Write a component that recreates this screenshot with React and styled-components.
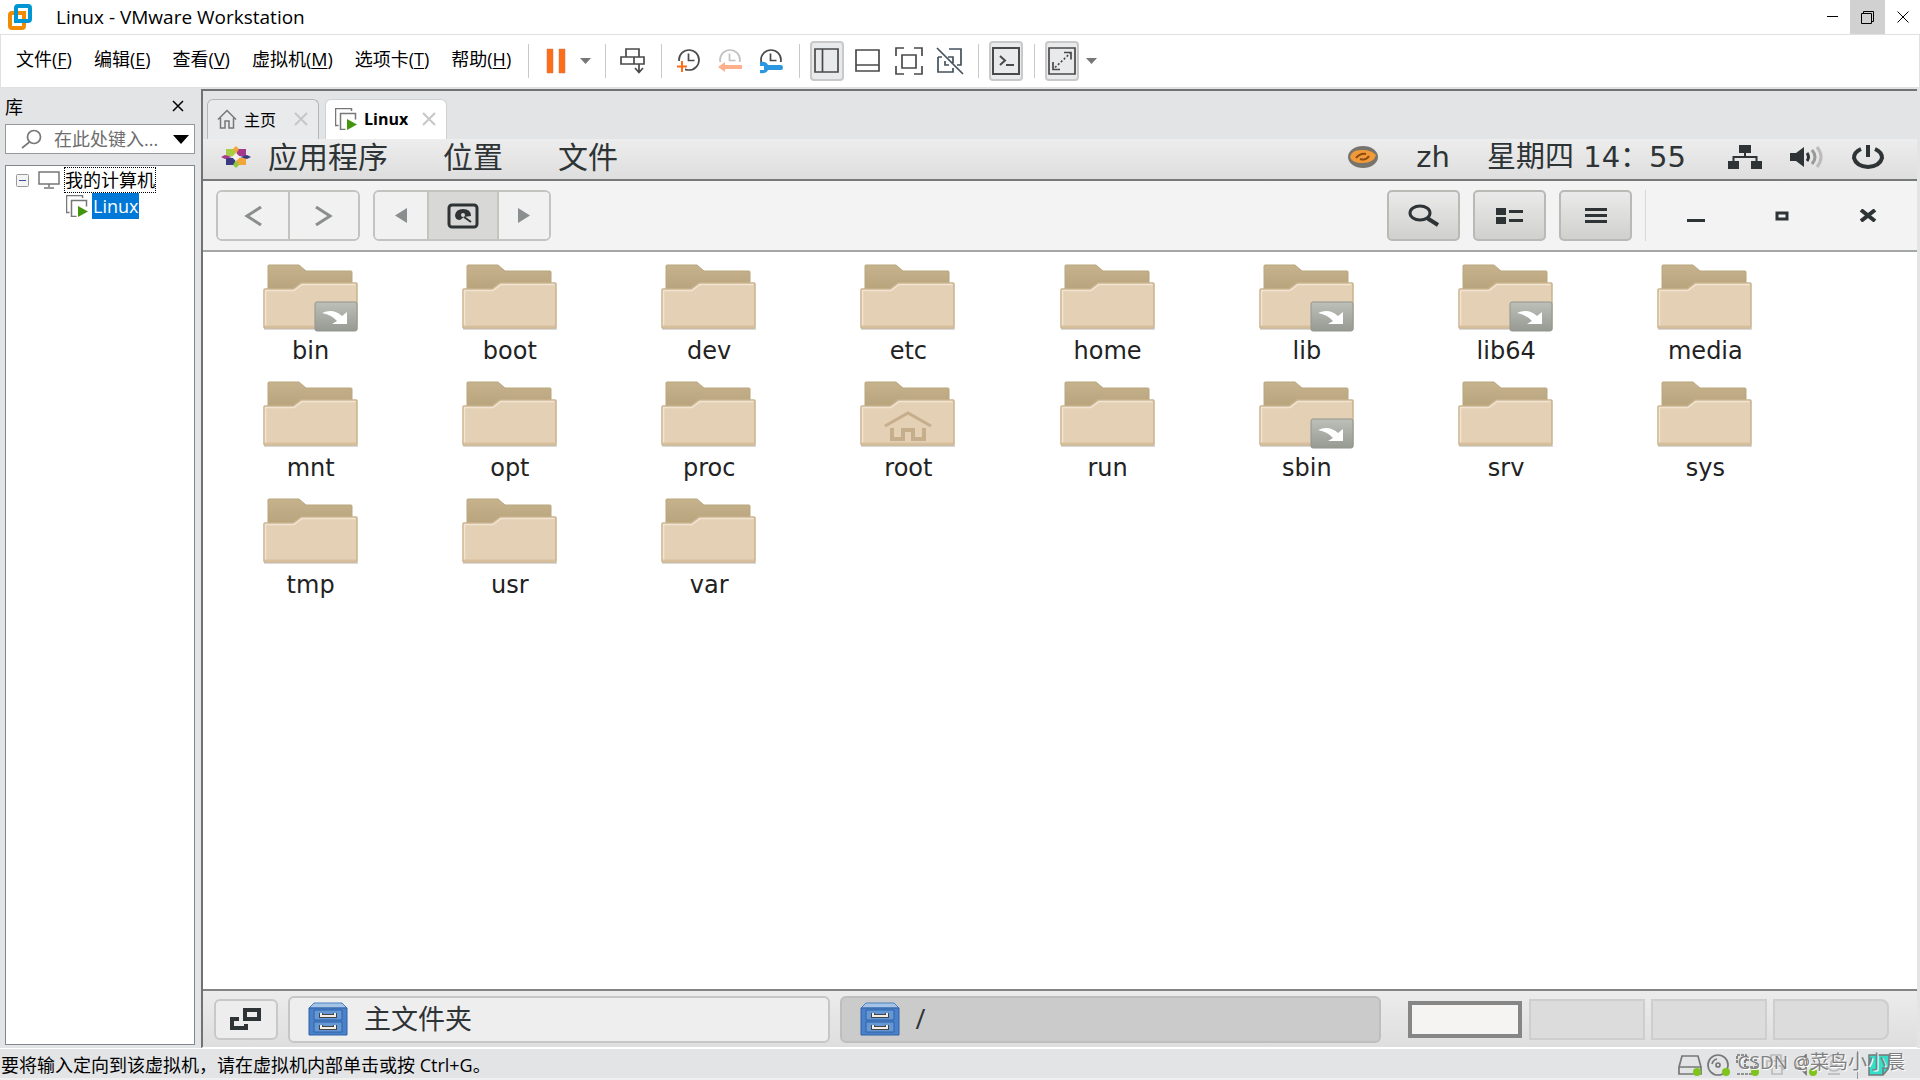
import React, { useState } from "react";
import styled, { createGlobalStyle, css } from "styled-components";

const menus = [
  { label: "文件", hotkey: "F" },
  { label: "编辑", hotkey: "E" },
  { label: "查看", hotkey: "V" },
  { label: "虚拟机", hotkey: "M" },
  { label: "选项卡", hotkey: "T" },
  { label: "帮助", hotkey: "H" },
];

const folders = [
  { name: "bin", link: true },
  { name: "boot" },
  { name: "dev" },
  { name: "etc" },
  { name: "home" },
  { name: "lib", link: true },
  { name: "lib64", link: true },
  { name: "media" },
  { name: "mnt" },
  { name: "opt" },
  { name: "proc" },
  { name: "root", home: true },
  { name: "run" },
  { name: "sbin", link: true },
  { name: "srv" },
  { name: "sys" },
  { name: "tmp" },
  { name: "usr" },
  { name: "var" },
];

function App() {
  return (
    <>
      <GlobalStyle />
      <Window>
        <TitleBar>
          <VmwareLogo />
          <Title>Linux - VMware Workstation</Title>
          <WindowButton aria-label="minimize">
            <svg width="14" height="14" stroke="#000"><path d="M1 6.5h11" /></svg>
          </WindowButton>
          <WindowButton aria-label="restore" $active>
            <svg width="14" height="14" stroke="#000" fill="none">
              <path d="M.5 3.5h10v10H.5zM2.5 3.5v-2h10v10h-2" />
            </svg>
          </WindowButton>
          <WindowButton aria-label="close">
            <svg width="14" height="14" stroke="#000"><path d="M1.5 1.5l11 11m0-11l-11 11" /></svg>
          </WindowButton>
        </TitleBar>
        <MenuBar>
          <Menus>
            {menus.map((menu) => (
              <MenuButton key={menu.hotkey}>
                {menu.label}(<u>{menu.hotkey}</u>)
              </MenuButton>
            ))}
          </Menus>
          <HostTools />
        </MenuBar>
        <Body>
          <Library />
          <Main>
            <Tabs>
              <Tab>
                <svg width="20" height="20" fill="none" stroke="#777" strokeWidth="1.5">
                  <path d="M1 10.5L10 1.5l9 9M3.5 9v10H8v-7h4v7h4.5V9" />
                </svg>
                主页
                <TabClose />
              </Tab>
              <Tab $active>
                <VmIcon />
                <b>Linux</b>
                <TabClose />
              </Tab>
            </Tabs>
            <Guest />
          </Main>
        </Body>
        <StatusBar />
      </Window>
    </>
  );
}

const VmwareLogo = () => (
  <svg width="24" height="26" viewBox="0 0 24 26" fill="none" strokeWidth="4">
    <rect x="2" y="9" width="14" height="15" rx="2" stroke="#f38b00" />
    <rect x="8" y="2" width="14" height="15" rx="2" stroke="#0095d3" />
    <path d="M8 13v4h3" stroke="#fff" strokeWidth="5" />
    <path d="M8 9v8h8" stroke="#0095d3" strokeWidth="4" />
    <path d="M10 9h6v6" stroke="#f38b00" strokeWidth="4" />
  </svg>
);

const VmIcon = () => (
  <svg width="22" height="22" viewBox="0 0 22 22" fill="none">
    <path d="M3.5 17.5h-3V.5h16V3" stroke="#777" strokeWidth="1.5" />
    <path d="M10.5 21.5h-5v-16h15v6" stroke="#777" strokeWidth="1.5" />
    <path d="M12 11l10 5.5-10 5.5z" fill="#43960d" />
  </svg>
);

const TabClose = () => (
  <CloseButton aria-label="close tab">
    <svg width="14" height="14" stroke="#c6c7c9" strokeWidth="2">
      <path d="M1 1l12 12M13 1L1 13" />
    </svg>
  </CloseButton>
);

const Caret = () => (
  <CaretButton aria-label="more">
    <svg width="11" height="6"><path d="M0 0h11L5.5 6z" fill="#777" /></svg>
  </CaretButton>
);

const Clock = ({ color = "#4a4a4a" }) => (
  <g fill="none" stroke={color} strokeWidth="1.7">
    <circle cx="13" cy="12" r="10" />
    <path d="M12.5 5.5v7h6" />
  </g>
);

function HostTools() {
  return (
    <Tools>
      <ToolGroup>
        <ToolButton aria-label="pause">
          <svg width="20" height="26" fill="#ff6c1a" stroke="#c77b52" strokeWidth=".5">
            <path d="M1 1h6v24H1zM13 1h6v24h-6z" />
          </svg>
        </ToolButton>
        <Caret />
      </ToolGroup>
      <ToolGroup>
        <ToolButton aria-label="send keys">
          <svg width="26" height="26" fill="none" stroke="#4a4a4a" strokeWidth="1.7">
            <path d="M6 1h13v8H6zM1 9h13v7H1zM14 9h10v7H14zM19 16v8M15 20l4 4.5 4-4.5" />
          </svg>
        </ToolButton>
      </ToolGroup>
      <ToolGroup>
        <ToolButton aria-label="take snapshot">
          <svg width="26" height="26">
            <Clock />
            <path d="M0 13h9v13H0z" fill="#fff" />
            <path d="M6 13v11M1 18.5h10" stroke="#ff6c1a" strokeWidth="2" />
          </svg>
        </ToolButton>
        <ToolButton aria-label="revert snapshot">
          <svg width="26" height="26">
            <Clock color="#c2c2c2" />
            <path d="M0 14h26v12H0z" fill="#fff" />
            <path d="M1 19l7-5v3h17v4H8v3z" fill="#ffb18c" />
          </svg>
        </ToolButton>
        <ToolButton aria-label="snapshot manager">
          <svg width="26" height="26">
            <Clock />
            <path d="M0 14h26v12H0z" fill="#fff" />
            <path d="M2 14q6-1 8 3h13q2 0 2 2.500t-2 2.500H10q-2 4-8 3v-3h4v-4H2z" fill="#2b97de" />
          </svg>
        </ToolButton>
      </ToolGroup>
      <ToolGroup>
        <ToolButton aria-label="library" $active>
          <svg width="26" height="26" fill="none" stroke="#4a4a4a" strokeWidth="1.7">
            <path d="M1 1h23v23H1zM8.5 1v23" />
          </svg>
        </ToolButton>
        <ToolButton aria-label="thumbnails">
          <svg width="26" height="26" fill="none" stroke="#4a4a4a" strokeWidth="1.7">
            <path d="M1 2h23v21H1zM1 17h23" />
          </svg>
        </ToolButton>
        <ToolButton aria-label="full screen">
          <svg width="28" height="28" fill="none" stroke="#4a4a4a" strokeWidth="1.7">
            <path d="M1 9V1h8M19 1h8v8M27 19v8h-8M9 27H1v-8M7 8h14v13H7z" />
          </svg>
        </ToolButton>
        <ToolButton aria-label="unity">
          <svg width="28" height="28" fill="none" stroke="#44525c" strokeWidth="1.7">
            <path d="M13 2h12v16h-4M2 10v15h15v-4M2 10h4M12 10h5v6M9 14v4h4M1 1l26 26" />
          </svg>
        </ToolButton>
      </ToolGroup>
      <ToolGroup>
        <ToolButton aria-label="console" $active>
          <svg width="28" height="28" fill="none" stroke="#4a4a4a" strokeWidth="2">
            <path d="M1 1h26v26H1z" />
            <path d="M8 9l5 4.5L8 18M14 18h8" />
          </svg>
        </ToolButton>
      </ToolGroup>
      <ToolGroup>
        <ToolButton aria-label="stretch" $active>
          <svg width="28" height="28" fill="none" stroke="#4a4a4a" strokeWidth="1.7">
            <path d="M1 1h26v26H1zM16 5.5h7v7M5 15v7.5h7" />
            <path d="M7 20.5L22 6.500" strokeDasharray="2 2" />
          </svg>
        </ToolButton>
        <Caret />
      </ToolGroup>
    </Tools>
  );
}

function Library() {
  const [query, setQuery] = useState("");

  return (
    <Sidebar>
      <SidebarHead>
        库
        <CloseButton aria-label="close library">
          <svg width="12" height="12" stroke="#000" strokeWidth="1.5">
            <path d="M1 1l10 10M11 1L1 11" />
          </svg>
        </CloseButton>
      </SidebarHead>
      <SearchBox>
        <svg width="21" height="20" fill="none" stroke="#777" strokeWidth="1.7">
          <circle cx="13" cy="8" r="6.5" />
          <path d="M8.5 13L1 19" />
        </svg>
        <input
          aria-label="search"
          placeholder="在此处键入..."
          value={query}
          onChange={(e) => setQuery(e.target.value)}
        />
        <svg width="16" height="9"><path d="M0 0h16L8 9z" /></svg>
      </SearchBox>
      <Tree>
        <TreeRow>
          <TreeToggle aria-label="collapse">
            <svg width="13" height="13" fill="#f4f4f4" stroke="#999">
              <rect x=".5" y=".5" width="12" height="12" rx="1" />
              <path d="M3 6.5h7" stroke="#3c4f9e" />
            </svg>
          </TreeToggle>
          <svg width="22" height="18" fill="none" stroke="#777" strokeWidth="1.5">
            <path d="M1 1h20v12H1zM11 13v3M6 17h10" />
          </svg>
          <TreeLabel $focused>我的计算机</TreeLabel>
        </TreeRow>
        <TreeRow $child>
          <VmIcon />
          <TreeLabel $selected>Linux</TreeLabel>
        </TreeRow>
      </Tree>
    </Sidebar>
  );
}

function FolderIcon({ link, home }) {
  return (
    <svg width="98" height="70" viewBox="0 0 98 70">
      <defs>
        <linearGradient id="back" x2="0" y2="1">
          <stop offset="0" stopColor="#c6b38d" />
          <stop offset="1" stopColor="#b7a37c" />
        </linearGradient>
        <linearGradient id="emblem" x2="0" y2="1">
          <stop offset="0" stopColor="#bcc0b8" />
          <stop offset="1" stopColor="#969a92" />
        </linearGradient>
      </defs>
      <path d="M2 66h94v2H2z" fill="#000" opacity=".15" />
      <path d="M6 28V4q0-1 1-1h30l7 6h45q1 0 1 1v18z" fill="url(#back)" stroke="#b9a67f" />
      <path
        d="M2 65V28q0-1 1-1h28l8-6h55q1 0 1 1v43q0 1-1 1H3q-1 0-1-1z"
        fill="#e3d0b5"
        stroke="#c9b28c"
        strokeWidth="1.5"
      />
      <path d="M3.5 64V28.5H32l8-6h53.5" fill="none" stroke="#f1e4d2" strokeWidth="1.5" />
      <path d="M3 64.5h91" stroke="#d9c09d" strokeWidth="2" />
      {home && (
        <g fill="none" stroke="#c6ae8c" strokeWidth="3">
          <path d="M26 47l23-13 23 13" />
          <path d="M33 49v11h11v-9h10v9h11V49" strokeWidth="4" />
        </g>
      )}
      {link && (
        <>
          <rect x="53" y="40" width="42" height="29" rx="2" fill="url(#emblem)" stroke="#92968f" />
          <path d="M60 51q11-5 20 3l5-4v12H70l5-3q-5-6-15-8z" fill="#fff" />
        </>
      )}
    </svg>
  );
}

const CabinetIcon = () => (
  <svg width="40" height="34" viewBox="0 0 40 34">
    <path d="M1 6l5-5h28l5 5z" fill="#a5c4e6" stroke="#4b80c0" />
    <path d="M1 6h38v27H1z" fill="#4a81c8" stroke="#2f62a8" />
    <path d="M6 8h28v10H6zM6 20h28v10H6z" fill="#6497d6" stroke="#2f62a8" />
    <path d="M13 11v3h14v-3M13 23v3h14v-3" fill="none" stroke="#444" strokeWidth="4" />
    <path d="M13 11v3h14v-3M13 23v3h14v-3" fill="none" stroke="#f0eee8" strokeWidth="2" />
  </svg>
);

const CentosLogo = () => (
  <svg width="30" height="22" viewBox="-15 -11 30 22">
    <path d="M-10-8h9v7h-9z" fill="#a5cd45" />
    <path d="M1-8h9v7H1z" fill="#a3388c" />
    <path d="M-10 1h9v7h-9z" fill="#3a3a83" />
    <path d="M1 1h9v7H1z" fill="#f0a63a" />
    <path d="M0-11l3 3-3 5-3-5z" fill="#f0a63a" />
    <path d="M0 11l3-3-3-5-3 5z" fill="#8fc93a" />
    <path d="M-15 0l4-2 7 2-7 2z" fill="#a3388c" />
    <path d="M15 0l-4-2-7 2 7 2z" fill="#3a3a83" />
    <circle r="3" fill="#f4f0ea" />
  </svg>
);

function Guest() {
  return (
    <Desktop>
      <TopPanel>
        <PanelMenu>
          <CentosLogo />
          应用程序
        </PanelMenu>
        <PanelMenu>位置</PanelMenu>
        <PanelMenu>文件</PanelMenu>
        <Tray>
          <svg width="32" height="24" viewBox="0 0 32 24">
            <ellipse cx="16" cy="12" rx="15" ry="11" fill="#77736d" />
            <path d="M3 12q2-8 13-7 8 0 13 5-2 8-14 8Q5 18 3 12z" fill="#f29a38" />
            <path d="M9 13q4-5 10-4M13 14q6 2 9-3" fill="none" stroke="#8a4a12" strokeWidth="2" />
          </svg>
          <span>zh</span>
          <time>星期四 14：55</time>
          <TrayIcons>
            <svg width="34" height="24" fill="#2e3436">
              <path d="M11 0h12v8H11zM0 16h11v8H0zM23 16h11v8H23z" />
              <path d="M17 8v4M5.5 17v-5h23v5" fill="none" stroke="#2e3436" strokeWidth="2" />
            </svg>
            <svg width="34" height="22" fill="none" strokeWidth="3">
              <path d="M0 7h6l8-6v20l-8-6H0z" fill="#2e3436" />
              <path d="M17 7q3 4 0 8" stroke="#2e3436" />
              <path d="M22 4q6 7 0 14" stroke="#999" />
              <path d="M27 1q8 10 0 20" stroke="#bbb" />
            </svg>
            <svg width="32" height="24" fill="none" stroke="#2e3436" strokeWidth="4">
              <path d="M9 4Q2 7 2 13q2 8 14 9 12-1 14-9 0-6-7-9" />
              <path d="M16 0v12" />
            </svg>
          </TrayIcons>
        </Tray>
      </TopPanel>
      <FilesBar>
        <LinkedButtons>
          <PathButton aria-label="back">
            <svg width="18" height="20" fill="none" stroke="#8b8e8f" strokeWidth="3">
              <path d="M17 1L3 10l14 9" />
            </svg>
          </PathButton>
          <PathButton aria-label="forward">
            <svg width="18" height="20" fill="none" stroke="#8b8e8f" strokeWidth="3">
              <path d="M1 1l14 9-14 9" />
            </svg>
          </PathButton>
        </LinkedButtons>
        <LinkedButtons>
          <PathButton aria-label="previous folder" $narrow>
            <svg width="12" height="15"><path d="M12 0v15L0 7.500z" fill="#8b8e8f" /></svg>
          </PathButton>
          <PathButton aria-label="filesystem root" $active>
            <svg width="32" height="26" fill="none" stroke="#2e3436" strokeWidth="3">
              <rect x="2" y="2" width="28" height="22" rx="3" />
              <path d="M8 12q1-6 8-6 8 0 8 7l-7 1-4 3q-5 0-5-5z" fill="#2e3436" stroke="none" />
              <path d="M17 14l7 5" strokeWidth="2" />
              <circle cx="16" cy="12" r="2" fill="#d8d8d6" stroke="none" />
            </svg>
          </PathButton>
          <PathButton aria-label="next folder" $narrow>
            <svg width="12" height="15"><path d="M0 0v15l12-7.500z" fill="#8b8e8f" /></svg>
          </PathButton>
        </LinkedButtons>
        <Actions>
          <ActionButton aria-label="search files">
            <svg width="32" height="23" fill="none" stroke="#2e3436">
              <ellipse cx="12" cy="9" rx="10" ry="7" strokeWidth="3" />
              <path d="M19 14l11 7" strokeWidth="4" />
            </svg>
          </ActionButton>
          <ActionButton aria-label="list view">
            <svg width="28" height="16" fill="#2e3436">
              <path d="M0 0h10v7H0zM0 9h10v7H0zM13 2h14v3H13zM13 11h14v3H13z" />
            </svg>
          </ActionButton>
          <ActionButton aria-label="menu">
            <svg width="22" height="16" fill="#2e3436">
              <path d="M0 0h22v3H0zM0 6h22v3H0zM0 12h22v3H0z" />
            </svg>
          </ActionButton>
        </Actions>
        <FrameButtons>
          <FrameButton aria-label="minimize files">
            <svg width="18" height="14"><path d="M0 10h18v3H0z" fill="#2e3436" /></svg>
          </FrameButton>
          <FrameButton aria-label="maximize files">
            <svg width="14" height="10" fill="none" stroke="#2e3436" strokeWidth="3">
              <path d="M2 2h10v6H2z" />
            </svg>
          </FrameButton>
          <FrameButton aria-label="close files">
            <svg width="18" height="13" stroke="#2e3436" strokeWidth="4">
              <path d="M2 1l14 11M16 1L2 12" />
            </svg>
          </FrameButton>
        </FrameButtons>
      </FilesBar>
      <Files>
        {folders.map((folder) => (
          <Folder key={folder.name}>
            <FolderIcon link={folder.link} home={folder.home} />
            {folder.name}
          </Folder>
        ))}
      </Files>
      <BottomPanel>
        <ShowDesktop aria-label="show desktop">
          <svg width="32" height="22" fill="none" stroke="#2e3436" strokeWidth="4">
            <path d="M15 2h14v9H15z" />
            <path d="M9 11H2v9h14v-4" />
          </svg>
        </ShowDesktop>
        <Task>
          <CabinetIcon />
          主文件夹
        </Task>
        <Task $active>
          <CabinetIcon />/
        </Task>
        <Workspaces>
          <Workspace aria-label="workspace 1" $active />
          <Workspace aria-label="workspace 2" />
          <Workspace aria-label="workspace 3" />
          <Workspace aria-label="workspace 4" />
        </Workspaces>
      </BottomPanel>
    </Desktop>
  );
}

const Dot = () => <circle cx="19" cy="18" r="4" fill="#7fc41c" stroke="none" />;

function StatusBar() {
  return (
    <Status>
      <span>要将输入定向到该虚拟机，请在虚拟机内部单击或按 Ctrl+G。</span>
      <Devices>
        <svg width="24" height="22" fill="none" stroke="#777" strokeWidth="1.7">
          <path d="M1 13L4 2h16l3 11v7H1zM1 13h22" />
          <Dot />
        </svg>
        <svg width="24" height="22" fill="none" stroke="#777" strokeWidth="1.7">
          <circle cx="11" cy="11" r="10" />
          <circle cx="11" cy="11" r="2" />
          <path d="M5 10q1-4 5-5" />
          <Dot />
        </svg>
        <svg width="24" height="22" fill="none" stroke="#777" strokeWidth="1.7">
          <path d="M1 9V1h9v7M9 13V6h11v7zM1 20h17" strokeDasharray="3 1" />
          <Dot />
        </svg>
        <svg width="24" height="22" fill="none" stroke="#bbb" strokeWidth="1.7">
          <path d="M6 7V1h10v6M6 15H2V7h19v8h-4M7 12h10v8H7z" />
        </svg>
        <svg width="24" height="22" fill="none" stroke="#777" strokeWidth="1.7">
          <path d="M2 7h4l6-6v19l-6-6H2z" />
          <Dot />
        </svg>
        <svg width="24" height="22" fill="none" stroke="#bbb" strokeWidth="1.7">
          <circle cx="11" cy="9" r="8" />
          <circle cx="11" cy="9" r="3" />
          <path d="M5 20h12" />
        </svg>
        <Divider />
        <svg width="22" height="22" fill="#32dfca" stroke="#777" strokeWidth="1.5">
          <path d="M1 1h20v13l-6 7H1zM15 21v-7h6" />
        </svg>
      </Devices>
      <Watermark>CSDN @菜鸟小小晨</Watermark>
    </Status>
  );
}

const GlobalStyle = createGlobalStyle`
  * {
    box-sizing: border-box;
  }
  body {
    margin: 0;
    background: #e3e4e6;
  }
  body, button, input {
    font-family: "Open Sans", "Noto Sans CJK SC", sans-serif;
    font-size: 18px;
    color: #000;
  }
  button {
    border: 0;
    padding: 0;
    background: none;
  }
  svg {
    flex: none;
    display: block;
  }
`;

const Window = styled.div`
  min-height: 100vh;
  display: flex;
  flex-direction: column;
`;

const TitleBar = styled.header`
  height: 34px;
  display: flex;
  align-items: center;
  padding-left: 8px;
  background: #fff;
`;

const Title = styled.h1`
  flex: 1;
  margin: 0 0 0 24px;
  font-size: 19px;
  font-weight: 400;
  line-height: 24px;
`;

const WindowButton = styled.button`
  width: 35px;
  height: 34px;
  display: flex;
  align-items: center;
  justify-content: center;
  background: ${(props) => (props.$active ? "#d1d1d1" : "none")};
`;

const MenuBar = styled.div`
  height: 54px;
  display: flex;
  align-items: center;
  background: #fff;
  border: 1px solid #e0e0e0;
`;

const Menus = styled.nav`
  display: flex;
  gap: 22px;
  padding: 0 17px 4px 15px;
`;

const MenuButton = styled.button`
  line-height: 26px;
  white-space: nowrap;
  u {
    text-underline-offset: 2px;
  }
`;

const Tools = styled.div`
  display: flex;
  align-items: center;
`;

const ToolGroup = styled.div`
  height: 34px;
  display: flex;
  align-items: center;
  gap: 7px;
  padding: 0 11px 0 10px;
  border-left: 1px solid #c9c9c9;
  &:first-child {
    padding-right: 14px;
  }
`;

const ToolButton = styled.button`
  width: 34px;
  height: 40px;
  display: flex;
  align-items: center;
  justify-content: center;
  border-radius: 4px;
  ${(props) =>
    props.$active &&
    css`
      background: #e9eaec;
      border: 2px solid #c9c9c9;
    `}
`;

const CaretButton = styled.button`
  width: 11px;
  display: flex;
`;

const CloseButton = styled.button`
  display: flex;
  margin-left: auto;
`;

const Body = styled.div`
  flex: 1;
  display: flex;
  min-height: 0;
`;

const Sidebar = styled.aside`
  width: 201px;
  flex: none;
  display: flex;
  flex-direction: column;
  padding: 0 6px 3px 5px;
`;

const SidebarHead = styled.div`
  height: 36px;
  display: flex;
  align-items: center;
  padding-right: 11px;
`;

const SearchBox = styled.label`
  height: 30px;
  display: flex;
  align-items: center;
  padding: 0 5px 0 15px;
  background: #fff;
  border: 1px solid #999;
  input {
    flex: 1;
    min-width: 0;
    border: 0;
    padding: 0 0 0 12px;
    background: none;
    outline: none;
  }
  input::placeholder {
    color: #6d6d6d;
    opacity: 1;
  }
`;

const Tree = styled.div`
  flex: 1;
  margin-top: 11px;
  padding: 1px 0 0 10px;
  background: #fff;
  border: 1px solid #828790;
`;

const TreeRow = styled.div`
  height: 26px;
  display: flex;
  align-items: center;
  gap: 4px;
  padding-left: ${(props) => (props.$child ? "50px" : "0")};
`;

const TreeToggle = styled.button`
  margin-right: 5px;
`;

const TreeLabel = styled.span`
  line-height: 24px;
  border: 1px ${(props) => (props.$focused ? "dotted #000" : "solid transparent")};
  ${(props) =>
    props.$selected &&
    css`
      color: #fff;
      background: #0078d7;
    `}
`;

const Main = styled.main`
  flex: 1;
  min-width: 0;
  display: flex;
  flex-direction: column;
  margin: 1px 3px 0 0;
  border-left: 2px solid #707274;
  border-top: 2px solid #707274;
  border-bottom: 1px solid #fff;
`;

const Tabs = styled.div`
  height: 48px;
  display: flex;
  align-items: flex-end;
  gap: 6px;
  padding-left: 4px;
`;

const Tab = styled.div`
  width: ${(props) => (props.$active ? "122px" : "112px")};
  height: 40px;
  display: flex;
  align-items: center;
  gap: 7px;
  padding: 0 10px 2px 9px;
  font-size: 16px;
  background: ${(props) => (props.$active ? "#fff" : "#e9eaec")};
  border: 1px solid ${(props) => (props.$active ? "#d0d1d3" : "#b4b5b7")};
  border-bottom: 0;
  border-radius: 6px 6px 0 0;
`;

const Desktop = styled.section`
  flex: 1;
  display: flex;
  flex-direction: column;
  color: #2e3436;
`;

const TopPanel = styled.div`
  height: 42px;
  display: flex;
  align-items: center;
  gap: 55px;
  padding: 0 33px 4px 18px;
  background: linear-gradient(#ededed, #dedede);
  border-bottom: 2px solid #77797a;
`;

const PanelMenu = styled.button`
  display: flex;
  align-items: center;
  gap: 17px;
  color: #2e3436;
  font-size: 30px;
  line-height: 36px;
`;

const Tray = styled.div`
  display: flex;
  align-items: center;
  gap: 37px;
  margin-left: auto;
  font-family: "DejaVu Sans", "Noto Sans CJK SC", sans-serif;
  font-size: 29px;
  line-height: 36px;
`;

const TrayIcons = styled.div`
  display: flex;
  align-items: center;
  gap: 28px;
  padding-left: 5px;
`;

const FilesBar = styled.div`
  height: 71px;
  display: flex;
  align-items: center;
  gap: 13px;
  padding: 0 13px;
  background: #f3f3f3;
  border-bottom: 2px solid #a5a7a5;
`;

const LinkedButtons = styled.div`
  height: 51px;
  display: flex;
  border: 2px solid #c3c4c0;
  border-radius: 6px;
  overflow: hidden;
`;

const PathButton = styled.button`
  width: ${(props) => (props.$narrow ? "52px" : "70px")};
  display: flex;
  align-items: center;
  justify-content: center;
  background: ${(props) => (props.$active ? "#d8d8d6" : "#f1f1f1")};
  & + & {
    border-left: 2px solid #c3c4c0;
  }
`;

const Actions = styled.div`
  display: flex;
  gap: 13px;
  margin-left: auto;
`;

const ActionButton = styled.button`
  width: 73px;
  height: 51px;
  display: flex;
  align-items: center;
  justify-content: center;
  background: linear-gradient(#eaeaea, #d0d0ce);
  border: 2px solid #b9bab6;
  border-radius: 5px;
`;

const FrameButtons = styled.div`
  height: 51px;
  display: flex;
  gap: 14px;
  padding-left: 14px;
  border-left: 1px solid #d8d8d8;
`;

const FrameButton = styled.button`
  width: 72px;
  display: flex;
  align-items: center;
  justify-content: center;
`;

const Files = styled.div`
  flex: 1;
  display: grid;
  grid-template-columns: repeat(8, 1fr);
  grid-auto-rows: 117px;
  align-content: start;
  padding: 10px 112px 0 8px;
  background: #fff;
`;

const Folder = styled.div`
  display: flex;
  flex-direction: column;
  align-items: center;
  gap: 2px;
  font-family: "DejaVu Sans", sans-serif;
  font-size: 24px;
  line-height: 34px;
  color: #222;
`;

const BottomPanel = styled.div`
  height: 58px;
  display: flex;
  align-items: center;
  gap: 10px;
  padding: 0 28px 0 11px;
  background: linear-gradient(#ececec, #dedede);
  border-top: 2px solid #848484;
`;

const ShowDesktop = styled.button`
  width: 64px;
  height: 41px;
  display: flex;
  align-items: center;
  justify-content: center;
  background: #ededed;
  border: 2px solid #c8c8c8;
  border-radius: 6px;
`;

const Task = styled.button`
  flex: 1;
  height: 47px;
  display: flex;
  align-items: center;
  gap: 16px;
  padding: 0 18px;
  color: #2e3436;
  font-size: 27px;
  line-height: 36px;
  background: ${(props) => (props.$active ? "#cbcbcb" : "#eeeeee")};
  border: 2px solid ${(props) => (props.$active ? "#bebebe" : "#c6c6c6")};
  border-radius: 6px;
`;

const Workspaces = styled.div`
  display: flex;
  align-items: center;
  gap: 6px;
  padding-left: 17px;
`;

const Workspace = styled.button`
  width: 116px;
  height: 41px;
  background: #dcdcdc;
  border: 2px solid #cecece;
  ${(props) =>
    props.$active &&
    css`
      width: 114px;
      height: 37px;
      margin-right: 1px;
      background: #f5f4f2;
      border: 4px solid #868686;
    `}
  &:last-child {
    border-radius: 0 8px 8px 0;
  }
`;

const Status = styled.footer`
  height: 32px;
  display: flex;
  align-items: center;
  justify-content: space-between;
  padding: 2px 30px 0 1px;
  position: relative;
  border-top: 1px solid #fff;
  border-bottom: 2px solid #f0f0f0;
  line-height: 26px;
`;

const Devices = styled.div`
  display: flex;
  align-items: center;
  gap: 5px;
`;

const Divider = styled.div`
  width: 1px;
  height: 28px;
  margin: 0 5px;
  background: #999;
`;

const Watermark = styled.span`
  position: absolute;
  right: 15px;
  top: 0;
  font-size: 19px;
  color: #808080;
  text-shadow: 1px 1px 0 #fff;
`;

export default App;
